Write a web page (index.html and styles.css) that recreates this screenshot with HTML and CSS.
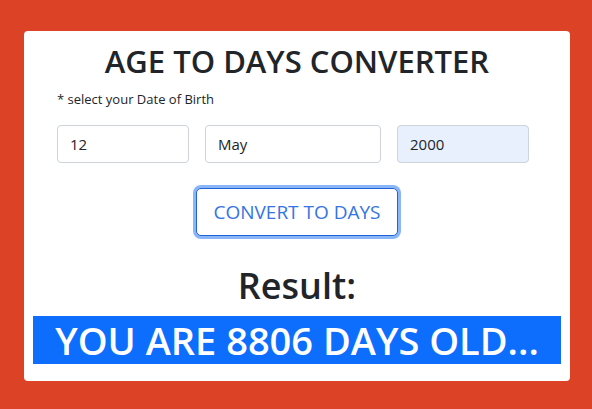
FILE: index.html
```html
<!DOCTYPE html>
<html>
<head>
<meta charset="utf-8">
<link rel="stylesheet" href="styles.css">
</head>
<body>
<div class="page">
  <div class="card">
    <h1 class="title">AGE TO DAYS CONVERTER</h1>
    <p class="hint">* select your Date of Birth</p>
    <div class="fields">
      <div class="field day">12</div>
      <div class="field month">May</div>
      <div class="field year">2000</div>
    </div>
    <div class="actions">
      <button class="btn">CONVERT TO DAYS</button>
    </div>
    <h2 class="result-label">Result:</h2>
    <div class="result">YOU ARE 8806 DAYS OLD...</div>
  </div>
</div>
</body>
</html>
```
FILE: styles.css
```css
html, body {
  margin: 0;
  padding: 0;
  background: #dc4326;
}
body {
  font-family: "Open Sans", "Noto Sans", sans-serif;
  color: #212529;
}
.page {
  padding: 31px 22px 28px 24px;
}
.card {
  background: #fff;
  border-radius: 4px;
  padding: 10px 9px 17px 9px;
}
.title {
  margin: 0;
  text-align: center;
  font-size: 31px;
  font-weight: 600;
  line-height: 40px;
}
.hint {
  margin: 9px 0 0 24px;
  font-size: 13px;
  line-height: 18px;
}
.fields {
  display: flex;
  gap: 16px;
  margin: 17px 32px 0 24px;
}
.field {
  height: 38px;
  box-sizing: border-box;
  border: 1px solid #ced4da;
  border-radius: 4px;
  padding: 0 12px;
  display: flex;
  align-items: center;
  font-size: 15px;
}
.day { width: 132px; }
.month { width: 176px; }
.year { width: 132px; background: #e8f0fe; }
.actions {
  display: flex;
  justify-content: center;
  margin-top: 25px;
}
.btn {
  width: 202px;
  height: 48px;
  border: 1px solid #1f63d6;
  border-radius: 5px;
  background: #fff;
  color: #3574e2;
  font-family: inherit;
  font-size: 19px;
  box-shadow: 0 0 0 3px #8ab6f8;
}
.result-label {
  margin: 28px 0 0;
  text-align: center;
  font-size: 36px;
  font-weight: 600;
  line-height: 44px;
}
.result {
  margin-top: 8px;
  background: #0d6efd;
  color: #fff;
  text-align: center;
  font-size: 38px;
  font-weight: 600;
  line-height: 48px;
  height: 48px;
}
```
